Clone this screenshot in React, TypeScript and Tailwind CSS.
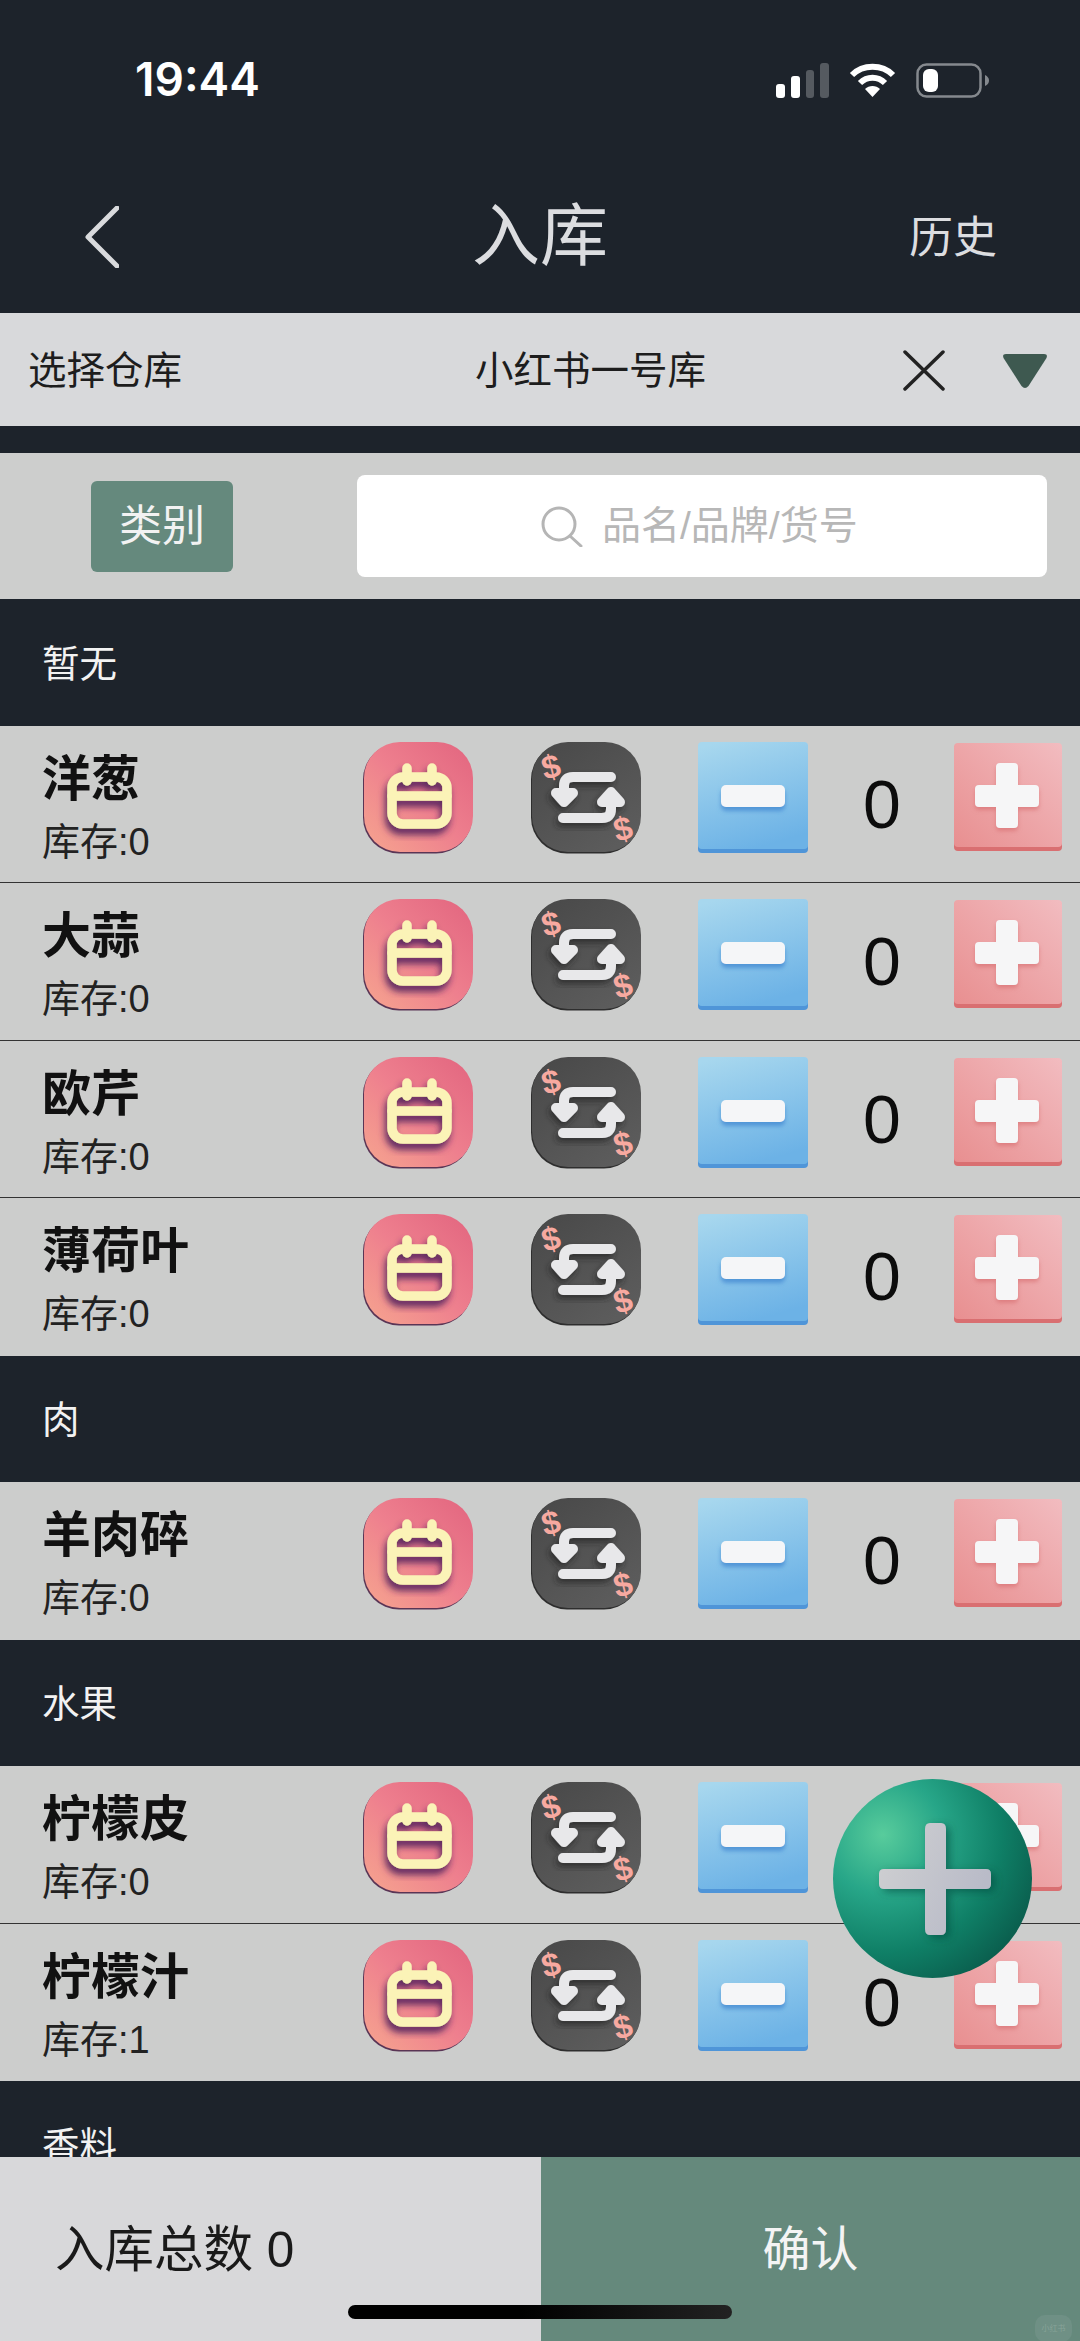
import React from "react";

function CalendarIcon() {
  return (
    <svg width="110" height="112" viewBox="0 0 110 112" className="block shrink-0">
      <defs>
        <linearGradient id="calbg" x1="0" y1="1" x2="1" y2="0">
          <stop offset="0" stopColor="#f6a58f" />
          <stop offset="0.5" stopColor="#ee7f8e" />
          <stop offset="1" stopColor="#e2657f" />
        </linearGradient>
        <filter id="calsh" x="-30%" y="-30%" width="160%" height="160%">
          <feDropShadow dx="-2" dy="6" stdDeviation="3.5" floodColor="#4e1f5c" floodOpacity="0.9" />
        </filter>
      </defs>
      <rect x="0" y="1.5" width="109" height="110" rx="36" fill="#5a3555" />
      <rect x="1" y="0" width="109" height="110" rx="36" fill="url(#calbg)" />
      <g filter="url(#calsh)" fill="none" stroke="#fbf3b7" strokeWidth="9.5" strokeLinecap="round">
        <rect x="29" y="35" width="55" height="47" rx="11" />
        <path d="M29 54H84M44 26V39M69 26V39" />
      </g>
    </svg>
  );
}

function SwapIcon() {
  return (
    <svg width="110" height="112" viewBox="0 0 110 112" className="block shrink-0">
      <defs>
        <linearGradient id="swbg" x1="0" y1="0" x2="0.7" y2="1">
          <stop offset="0" stopColor="#484848" />
          <stop offset="1" stopColor="#5c5c5c" />
        </linearGradient>
        <filter id="swsh" x="-30%" y="-30%" width="160%" height="160%">
          <feDropShadow dx="-2" dy="4" stdDeviation="3" floodColor="#222" floodOpacity="0.7" />
        </filter>
      </defs>
      <rect x="0" y="1.5" width="109" height="110" rx="36" fill="#2e2e2e" />
      <rect x="1" y="0" width="109" height="110" rx="36" fill="url(#swbg)" />
      <g filter="url(#swsh)" fill="none" stroke="#e8e8ea" strokeWidth="10" strokeLinecap="round" strokeLinejoin="round">
        <path d="M80 35H42Q33 35 33 44V56" />
        <path d="M25 51L33 60L42 51Z" fill="#e8e8ea" />
        <path d="M32 76H71Q80 76 80 67V56" />
        <path d="M71 60L80 50L89 60Z" fill="#e8e8ea" />
      </g>
      <text x="20" y="36" fontSize="33" fontWeight="700" fill="#f7a9a0" textAnchor="middle" transform="rotate(-14 20 25)" fontFamily="Liberation Sans">$</text>
      <text x="92" y="98" fontSize="33" fontWeight="700" fill="#f7a9a0" textAnchor="middle" transform="rotate(-14 92 87)" fontFamily="Liberation Sans">$</text>
    </svg>
  );
}

function MinusIcon() {
  return (
    <svg width="110" height="112" viewBox="0 0 110 112" className="block shrink-0">
      <defs>
        <linearGradient id="mibg" x1="0.2" y1="0" x2="0.5" y2="1">
          <stop offset="0" stopColor="#a7d7ee" />
          <stop offset="1" stopColor="#6cb2e6" />
        </linearGradient>
        <filter id="mish" x="-30%" y="-50%" width="160%" height="220%">
          <feDropShadow dx="0" dy="4" stdDeviation="2" floodColor="#3f86d0" floodOpacity="0.75" />
        </filter>
      </defs>
      <rect x="0" y="2" width="110" height="109" rx="4" fill="#4f95d8" />
      <rect x="0" y="0" width="110" height="107" rx="4" fill="url(#mibg)" />
      <rect x="23" y="43" width="64" height="22" rx="5" fill="#f5f6f8" filter="url(#mish)" />
    </svg>
  );
}

function PlusIcon() {
  return (
    <svg width="108" height="110" viewBox="0 0 108 110" className="mt-[1px] block shrink-0">
      <defs>
        <linearGradient id="plbg" x1="0" y1="1" x2="1" y2="0">
          <stop offset="0" stopColor="#e88f90" />
          <stop offset="1" stopColor="#f2bcc0" />
        </linearGradient>
        <filter id="plsh" x="-30%" y="-30%" width="160%" height="160%">
          <feDropShadow dx="0" dy="3" stdDeviation="2" floodColor="#d56a6c" floodOpacity="0.6" />
        </filter>
      </defs>
      <rect x="0" y="2" width="108" height="106" rx="4" fill="#d96f71" />
      <rect x="0" y="0" width="108" height="104" rx="4" fill="url(#plbg)" />
      <path
        d="M46 20H60Q64 20 64 24V42H81Q85 42 85 46V60Q85 64 81 64H64V81Q64 85 60 85H46Q42 85 42 81V64H25Q21 64 21 60V46Q21 42 25 42H42V24Q42 20 46 20Z"
        fill="#f6f6f7"
        filter="url(#plsh)"
      />
    </svg>
  );
}

function Fab() {
  return (
    <svg width="199" height="199" viewBox="0 0 199 199" className="block">
      <defs>
        <radialGradient id="fabg" cx="0.25" cy="0.28" r="0.85">
          <stop offset="0" stopColor="#58cc9c" />
          <stop offset="0.35" stopColor="#27a688" />
          <stop offset="0.7" stopColor="#0f7f66" />
          <stop offset="1" stopColor="#0a5c4c" />
        </radialGradient>
        <linearGradient id="fabx" x1="0" y1="0" x2="1" y2="0.4">
          <stop offset="0" stopColor="#d0d1d2" />
          <stop offset="1" stopColor="#b9bbc8" />
        </linearGradient>
        <filter id="fabsh" x="-30%" y="-30%" width="160%" height="160%">
          <feDropShadow dx="4" dy="3" stdDeviation="4" floodColor="#064a3c" floodOpacity="0.6" />
        </filter>
      </defs>
      <circle cx="99.5" cy="99.5" r="99.5" fill="url(#fabg)" />
      <path
        d="M97 44H108Q113 44 113 50V90H153Q158 90 158 95V105Q158 110 153 110H113V150Q113 156 108 156H97Q92 156 92 150V110H51Q46 110 46 105V95Q46 90 51 90H92V50Q92 44 97 44Z"
        fill="url(#fabx)"
        filter="url(#fabsh)"
      />
    </svg>
  );
}

function Item({ name, stock, last }: { name: string; stock: number; last?: boolean }) {
  return (
    <div className={`flex h-[157.5px] items-start bg-[#cccdcc] pt-[16px] ${last ? "" : "border-b border-[#333333]"}`}>
      <div className="flex w-[363px] shrink-0 flex-col pl-[42px] pt-[6px]">
        <div className="text-[49px] font-bold leading-[62px] text-[#111111]">{name}</div>
        <div className="mt-[8px] text-[38px] leading-[48px] text-[#222222]">库存:{stock}</div>
      </div>
      <CalendarIcon />
      <div className="w-[58px] shrink-0" />
      <SwapIcon />
      <div className="w-[57px] shrink-0" />
      <MinusIcon />
      <div className="mt-[28px] w-[146px] shrink-0 pl-[2px] text-center text-[68px] leading-none text-[#0c0c0c]">0</div>
      <PlusIcon />
    </div>
  );
}

function Section({ title }: { title: string }) {
  return <div className="flex h-[126.5px] items-center pl-[42px] pt-[3px] text-[37.5px] text-[#f2f2f2]">{title}</div>;
}

export default function App() {
  return (
    <div className="relative flex h-[2341px] w-[1080px] flex-col overflow-hidden bg-[#1d232b] [font-family:'Liberation_Sans','Noto_Sans_CJK_SC',sans-serif]">
      {/* status bar + nav */}
      <div className="h-[313px] shrink-0">
        <div className="flex h-[160px] items-start justify-between pl-[135px] pr-[90px] pt-[50px]">
          <span className="text-[46px] font-semibold leading-[58px] text-white [font-family:Inter,sans-serif]">19:44</span>
          <div className="mt-[13px] flex items-start gap-[20px]">
            <svg width="53" height="35" viewBox="0 0 53 35">
              <rect x="0" y="21" width="9" height="14" rx="3" fill="#fff" />
              <rect x="15" y="13" width="9" height="22" rx="3" fill="#fff" />
              <rect x="30" y="7" width="8" height="28" rx="3" fill="#555a60" />
              <rect x="44" y="0" width="9" height="35" rx="3" fill="#555a60" />
            </svg>
            <svg width="47" height="35" viewBox="0 0 47 35" fill="none" stroke="#fff" strokeWidth="6">
              <path d="M3 12C14 1 33 1 44 12" />
              <path d="M11 20C18 13 29 13 36 20" />
              <path d="M23.5 34L16 26C20 22 27 22 31 26Z" fill="#fff" stroke="none" />
            </svg>
            <svg width="74" height="35" viewBox="0 0 74 35">
              <rect x="1.5" y="1.5" width="63" height="32" rx="9" fill="none" stroke="#85898e" strokeWidth="2.5" />
              <rect x="7" y="6" width="15" height="23" rx="6" fill="#fff" />
              <path d="M69 12Q73 14 73 17.5Q73 21 69 23Z" fill="#85898e" />
            </svg>
          </div>
        </div>
        <div className="relative flex h-[153px] items-start justify-between pl-[85px] pr-[83px] pt-[46px]">
          <svg width="34" height="62" viewBox="0 0 34 62" fill="none" stroke="#d9dadd" strokeWidth="5" strokeLinecap="round" strokeLinejoin="round">
            <path d="M32 2L3 31L32 60" />
          </svg>
          <span className="absolute left-[472px] top-[36px] text-[68px] font-normal leading-[80px] text-[#dcdde0]">入库</span>
          <span className="mt-[2px] text-[44px] font-normal leading-[60px] text-[#dcdde0]">历史</span>
        </div>
      </div>

      {/* warehouse selector */}
      <div className="flex h-[113px] shrink-0 items-center bg-[#d8d9db] pl-[28px] pt-[2px]">
        <span className="w-[447px] text-[38.5px] text-[#1d1d1d]">选择仓库</span>
        <span className="w-[428px] text-[38.5px] text-[#1d1d1d]">小红书一号库</span>
        <svg width="42" height="41" viewBox="0 0 42 41" fill="none" stroke="#222" strokeWidth="3.5" strokeLinecap="round">
          <path d="M2 2L40 39M40 2L2 39" />
        </svg>
        <svg width="46" height="36" viewBox="0 0 46 36" className="ml-[57px]">
          <path d="M4 1H42Q46 1 44.5 5L26.5 33Q23 37 19.5 33L1.5 5Q0 1 4 1Z" fill="#3e5950" />
        </svg>
      </div>

      <div className="h-[27px] shrink-0" />

      {/* filter */}
      <div className="flex h-[146px] shrink-0 items-center bg-[#cdcecd] pl-[91px] pr-[33px]">
        <div className="flex h-[91px] w-[142px] items-center justify-center rounded-[6px] bg-[#65897d] text-[43px] text-[#f2f2f2]">类别</div>
        <div className="ml-[124px] flex h-[102px] flex-1 items-center rounded-[8px] bg-white pl-[184px]">
          <svg width="42" height="41" viewBox="0 0 42 41" fill="none" stroke="#b5b5b5" strokeWidth="3" strokeLinecap="round">
            <circle cx="18" cy="18" r="16" />
            <path d="M29 30L40 40" />
          </svg>
          <span className="ml-[19px] pt-[1px] text-[39px] text-[#b7b7b7]">品名/品牌/货号</span>
        </div>
      </div>

      {/* list */}
      <div className="min-h-0 flex-1 overflow-hidden">
        <Section title="暂无" />
        <Item name="洋葱" stock={0} />
        <Item name="大蒜" stock={0} />
        <Item name="欧芹" stock={0} />
        <Item name="薄荷叶" stock={0} last />
        <Section title="肉" />
        <Item name="羊肉碎" stock={0} last />
        <Section title="水果" />
        <Item name="柠檬皮" stock={0} />
        <Item name="柠檬汁" stock={1} last />
        <Section title="香料" />
      </div>

      {/* bottom */}
      <div className="flex h-[184px] shrink-0">
        <div className="w-[541px] bg-[#d8d8da] pl-[55px] pt-[58px] text-[49.5px] leading-[70px] text-[#1a1a1a]">入库总数 0</div>
        <div className="flex-1 bg-[#65897c] pt-[58px] text-center text-[48px] leading-[70px] text-[#f4f4f4]">确认</div>
      </div>

      {/* overlays */}
      <div className="absolute left-[833px] top-[1779px]">
        <Fab />
      </div>
      <div className="absolute left-[348px] top-[2305px] h-[14px] w-[384px] rounded-full bg-[linear-gradient(90deg,#000_45%,#222_100%)]" />
      <div className="absolute left-[1035px] top-[2315px] flex h-[27px] w-[37px] items-center justify-center rounded-[10px] bg-[#6f9085] text-[8px] text-[#87a399]">小红书</div>
    </div>
  );
}
